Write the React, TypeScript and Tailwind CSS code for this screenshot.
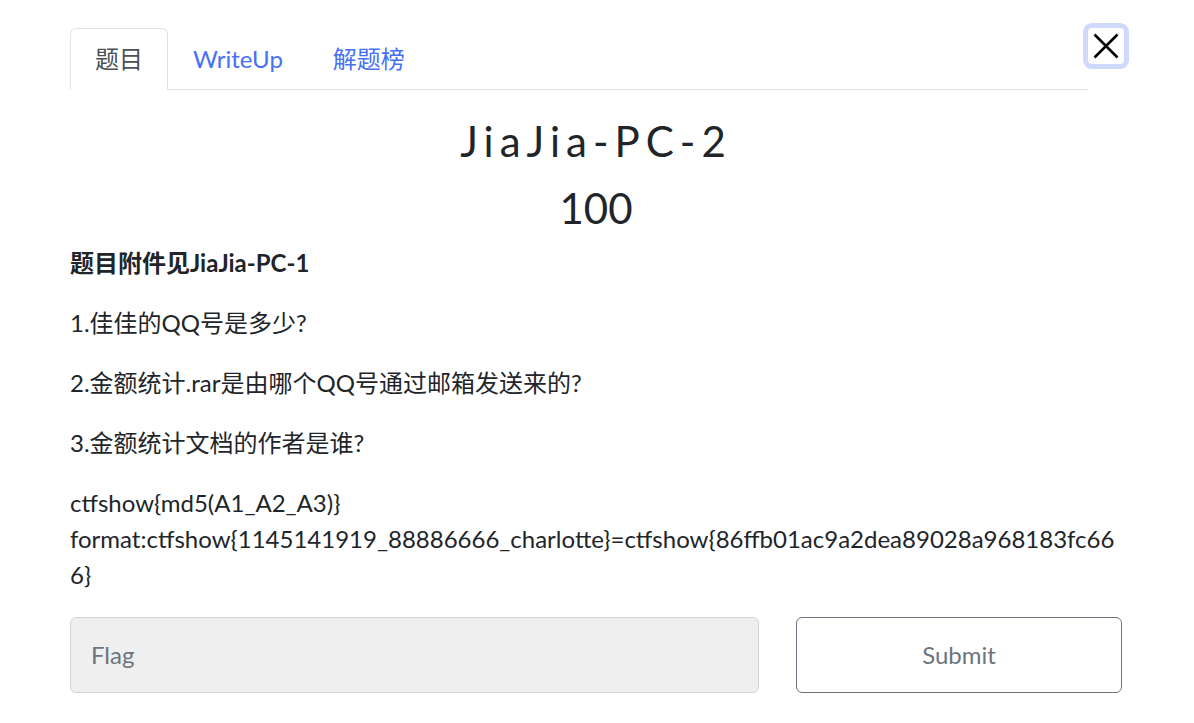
import React from "react";

export default function App() {
  const font = { fontFamily: '"Lato", "Noto Sans CJK SC", sans-serif' };
  return (
    <div className="min-h-[723px] bg-white text-[#212529]" style={font}>
      <div className="pl-[70px] pr-[72px] pt-[28px]">
        <div className="flex items-start">
          <ul className="flex flex-1 border-b border-[#dee2e6] text-[24px] leading-[36px]">
            <li className="-mb-px">
              <span className="block rounded-t-[6px] border border-[#dee2e6] border-b-white bg-white px-[24px] py-[12px] text-[#495057]">
                题目
              </span>
            </li>
            <li className="-mb-px">
              <span className="block border border-transparent px-[24px] py-[12px] text-[#4670f5]">
                WriteUp
              </span>
            </li>
            <li className="-mb-px">
              <span className="block border border-transparent px-[24px] py-[12px] text-[#4670f5]">
                解题榜
              </span>
            </li>
          </ul>
          <button className="-mr-[2px] flex h-[36px] w-[36px] items-center justify-center rounded-[4px] bg-white shadow-[0_0_0_5px_#cfd9fc]">
            <svg width="26" height="26" viewBox="0 0 26 26">
              <path d="M1.5 1.5 L24.5 24.5 M24.5 1.5 L1.5 24.5" stroke="#000" strokeWidth="2.6" strokeLinecap="butt" />
            </svg>
          </button>
        </div>

        <h3 className="mt-[26px] text-center text-[42px] leading-[1.2] font-normal tracking-[6px]">
          JiaJia-PC-2
        </h3>
        <h4 className="mt-[17px] text-center text-[42px] leading-[1.2] font-normal">100</h4>

        <div className="mt-[11px] text-[24px] leading-[36px]">
          <p className="mb-[24px] font-bold">题目附件见JiaJia-PC-1</p>
          <p className="mb-[24px]">1.佳佳的QQ号是多少?</p>
          <p className="mb-[24px]">2.金额统计.rar是由哪个QQ号通过邮箱发送来的?</p>
          <p className="mb-[24px]">3.金额统计文档的作者是谁?</p>
          <p className="break-all">
            ctfshow{"{"}md5(A1_A2_A3){"}"}
            <br />
            format:ctfshow{"{"}1145141919_88886666_charlotte{"}"}=ctfshow{"{"}86ffb01ac9a2dea89028a968183fc666{"}"}
          </p>
        </div>

        <div className="mt-[24px] flex gap-[37px]">
          <div className="flex h-[76px] w-[689px] items-center rounded-[6px] border border-[#d4d4d4] bg-[#efefef] px-[20px] text-[24px] text-[#6c757d]">
            Flag
          </div>
          <button className="flex h-[76px] flex-1 items-center justify-center rounded-[6px] border border-[#6c757d] bg-white text-[24px] text-[#6c757d]">
            Submit
          </button>
        </div>
      </div>
    </div>
  );
}
